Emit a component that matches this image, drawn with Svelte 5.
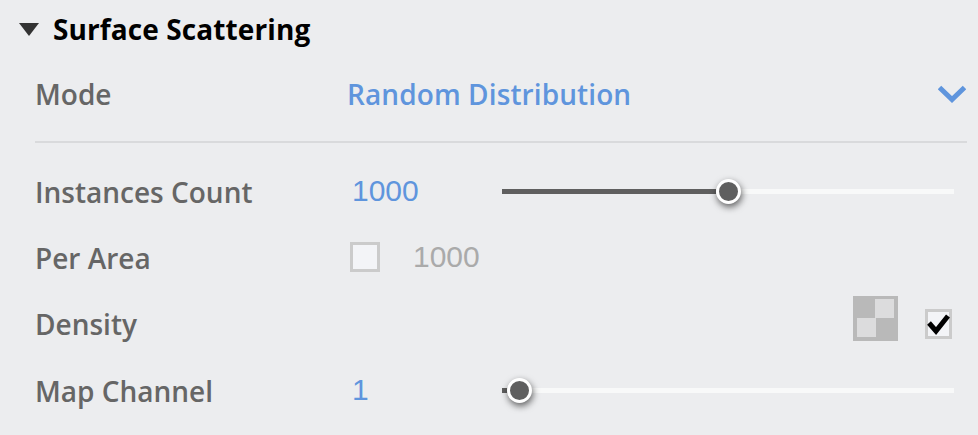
<script lang="ts">
  let mode = 'Random Distribution'
  let sliders = { count: 1000, channel: 1 }
</script>

<div class="panel">
  <div class="header">
    <svg class="caret" width="20" height="13" viewBox="0 0 20 13"><path d="M0 0H20L10 13Z" fill="#333" /></svg>
    <span class="title">Surface Scattering</span>
  </div>

  <div class="mode-row">
    <span class="label">Mode</span>
    <span class="mode-value">{mode}</span>
    <svg class="chevron" width="28" height="18" viewBox="0 0 28 18"><path d="M1.5 2.5L14 14.5L26.5 2.5" fill="none" stroke="#5f95dd" stroke-width="5" /></svg>
  </div>

  <div class="rows">
    <div class="row">
      <span class="label">Instances Count</span>
      <span class="num">{sliders.count}</span>
      <div class="slider">
        <div class="fill count-fill"></div>
        <div class="thumb"></div>
        <div class="rest"></div>
      </div>
    </div>

    <div class="row">
      <span class="label">Per Area</span>
      <div class="area">
        <span class="check"></span>
        <span class="num muted">1000</span>
      </div>
    </div>

    <div class="row">
      <span class="label">Density</span>
      <div class="density">
        <div class="map"></div>
        <span class="check on">
          <svg width="21" height="24" viewBox="0 0 21 24"><path d="M1 11L8 19L20 4" fill="none" stroke="#000" stroke-width="5" /></svg>
        </span>
      </div>
    </div>

    <div class="row">
      <span class="label">Map Channel</span>
      <span class="num">{sliders.channel}</span>
      <div class="slider">
        <div class="fill channel-fill"></div>
        <div class="thumb"></div>
        <div class="rest"></div>
      </div>
    </div>
  </div>
</div>

<style>
  :global(body) {
    background: #ecedef;
  }

  .panel {
    width: 978px;
    height: 435px;
    overflow: hidden;
    box-sizing: border-box;
    padding: 0 11px 0 19px;
    font-family: 'Open Sans', 'Noto Sans', sans-serif;
  }

  .header {
    height: 58px;
    display: flex;
    align-items: center;
    gap: 14px;
  }

  .title {
    font-size: 28px;
    font-weight: 700;
    color: #000;
    letter-spacing: 0.1px;
  }

  .label {
    width: 318px;
    flex: none;
    font-size: 28px;
    font-weight: 600;
    color: #666;
  }

  .mode-row {
    margin-left: 16px;
    height: 85px;
    display: flex;
    align-items: center;
    padding-bottom: 11px;
    box-sizing: border-box;
    border-bottom: 2px solid #d9dadc;
  }

  .mode-row .label {
    width: 312px;
  }

  .mode-value {
    flex: 1;
    margin-bottom: 1px;
    font-size: 28px;
    font-weight: 600;
    color: #5f95dd;
    letter-spacing: 0.1px;
  }

  .chevron {
    margin-right: 1px;
  }

  .rows {
    margin-left: 16px;
    padding-top: 15px;
  }

  .row {
    height: 66.3px;
    display: flex;
    align-items: center;
  }

  .row .label {
    margin-top: 1px;
  }

  .num {
    width: 150px;
    margin-left: -1px;
    flex: none;
    font-family: 'Liberation Sans', Arial, sans-serif;
    font-size: 30px;
    color: #5f95dd;
  }

  .muted {
    color: #aaa;
  }

  .slider {
    width: 452px;
    display: flex;
    align-items: center;
  }

  .fill {
    height: 5px;
    background: #5f5f5f;
    flex: none;
  }

  .count-fill {
    width: 214px;
  }

  .channel-fill {
    width: 5px;
  }

  .rest {
    flex: 1;
    height: 5px;
    background: #f8f9f9;
  }

  .thumb {
    width: 19px;
    height: 19px;
    flex: none;
    border-radius: 50%;
    background: #5f5f5f;
    border: 3.5px solid #fff;
    box-shadow: 1px 3px 7px rgba(0, 0, 0, 0.6);
    position: relative;
    z-index: 1;
  }

  .area {
    margin-left: -3px;
    display: flex;
    align-items: center;
    gap: 34px;
  }

  .check {
    width: 24px;
    height: 24px;
    flex: none;
    background: #f3f4f7;
    border: 3px solid #cbcbcb;
    display: block;
  }

  .check.on {
    width: 21px;
  }

  .check svg {
    display: block;
    overflow: visible;
  }

  .density {
    margin-left: auto;
    margin-right: 15px;
    display: flex;
    align-items: center;
    gap: 27px;
  }

  .map {
    width: 45px;
    height: 45px;
    margin-bottom: 11px;
    background-color: #b9b9b9;
    background-image:
      linear-gradient(#dcdcdd, #dcdcdd),
      linear-gradient(#dcdcdd, #dcdcdd);
    background-size: 19px 19px;
    background-position: 22px 3px, 4px 22px;
    background-repeat: no-repeat;
  }
</style>
